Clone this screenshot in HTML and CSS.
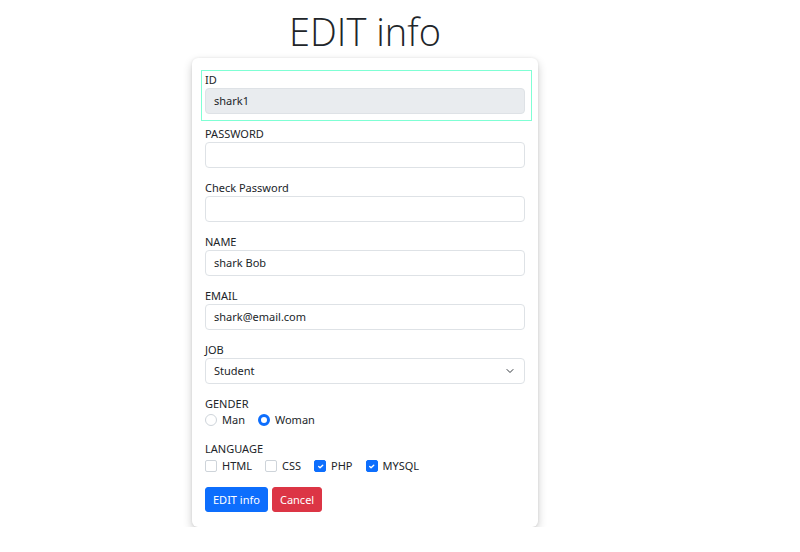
FILE: index.html
```html
<!DOCTYPE html>
<html lang="en">
<head>
<meta charset="utf-8">
<title>EDIT info</title>
<link rel="stylesheet" href="styles.css">
</head>
<body>
<main class="page">
  <h1 class="title">EDIT info</h1>
  <form class="card">
    <div class="group group-id">
      <label class="label">ID</label>
      <div class="input disabled">shark1</div>
    </div>
    <div class="group">
      <label class="label">PASSWORD</label>
      <div class="input"></div>
    </div>
    <div class="group">
      <label class="label">Check Password</label>
      <div class="input"></div>
    </div>
    <div class="group">
      <label class="label">NAME</label>
      <div class="input">shark Bob</div>
    </div>
    <div class="group">
      <label class="label">EMAIL</label>
      <div class="input">shark@email.com</div>
    </div>
    <div class="group">
      <label class="label">JOB</label>
      <div class="input select">
        <span>Student</span>
        <svg class="chev" width="10" height="8" viewBox="0 0 16 16"><path d="M2 5l6 6 6-6" fill="none" stroke="#343a40" stroke-width="2" stroke-linecap="round" stroke-linejoin="round"/></svg>
      </div>
    </div>
    <div class="group group-check">
      <label class="label">GENDER</label>
      <div class="options">
        <span class="opt"><span class="radio"></span>Man</span>
        <span class="opt"><span class="radio on"></span>Woman</span>
      </div>
    </div>
    <div class="group group-check2">
      <label class="label">LANGUAGE</label>
      <div class="options options-low">
        <span class="opt"><span class="box"></span>HTML</span>
        <span class="opt"><span class="box"></span>CSS</span>
        <span class="opt"><span class="box on"><svg width="9" height="9" viewBox="0 0 20 20"><path d="M6 10l3 3 6-6" fill="none" stroke="#fff" stroke-width="3" stroke-linecap="round" stroke-linejoin="round"/></svg></span>PHP</span>
        <span class="opt"><span class="box on"><svg width="9" height="9" viewBox="0 0 20 20"><path d="M6 10l3 3 6-6" fill="none" stroke="#fff" stroke-width="3" stroke-linecap="round" stroke-linejoin="round"/></svg></span>MYSQL</span>
      </div>
    </div>
    <div class="buttons">
      <button type="button" class="btn btn-primary">EDIT info</button>
      <button type="button" class="btn btn-danger">Cancel</button>
    </div>
  </form>
</main>
</body>
</html>
```

FILE: styles.css
```css
* { box-sizing: border-box; }
html, body { margin: 0; padding: 0; background: #fff; }
body {
  font-family: "Noto Sans", "Open Sans", sans-serif;
  font-size: 11px;
  color: #212529;
}
.page {
  width: 730px;
  display: flex;
  flex-direction: column;
  align-items: center;
}
.title {
  margin: 6px 0 2px;
  font-family: "Open Sans", "Noto Sans", sans-serif;
  font-weight: 300;
  font-size: 38px;
  line-height: 50px;
  color: #212529;
}
.card {
  width: 346px;
  padding: 12px 13px 15px;
  background: #fff;
  border-radius: 6px;
  box-shadow: 0 4px 10px rgba(0,0,0,0.2), 0 0 3px rgba(0,0,0,0.08);
  display: flex;
  flex-direction: column;
}
.group { margin-bottom: 12px; display: flex; flex-direction: column; }
.group-id {
  border: 1px solid #7fffd4;
  margin: 0 -7px 5px -4px;
  padding: 1px 6px 6px 3px;
}
.label { display: block; line-height: 16px; height: 16px; }
.input {
  height: 26px;
  border: 1px solid #dee2e6;
  border-radius: 4px;
  padding: 0 8px;
  display: flex;
  align-items: center;
  line-height: 16px;
}
.disabled { background: #e9ecef; }
.select { justify-content: space-between; padding-right: 9px; }
.chev { display: block; }
.group-check { margin-bottom: 13px; }
.group-check2 { margin-bottom: 13px; }
.options { display: flex; height: 16px; align-items: center; }
.options-low { margin-top: 1px; }
.opt { display: inline-flex; align-items: center; margin-right: 13px; line-height: 16px; }
.radio {
  width: 12px; height: 12px;
  border: 1px solid #ced4da;
  border-radius: 50%;
  margin-right: 5px;
  background: #fff;
}
.radio.on { border: 3.5px solid #0d6efd; }
.box {
  width: 12px; height: 12px;
  border: 1px solid #ced4da;
  border-radius: 2px;
  margin-right: 5px;
  display: inline-flex;
  align-items: center;
  justify-content: center;
}
.box.on { background: #0d6efd; border-color: #0d6efd; }
.box svg { display: block; }
.buttons { display: flex; gap: 4px; }
.btn {
  height: 25px;
  padding: 0 7px;
  border: 1px solid transparent;
  border-radius: 3px;
  font-family: inherit;
  font-size: 11px;
  color: #fff;
  cursor: pointer;
}
.btn-primary { background: #0d6efd; border-color: #0d6efd; }
.btn-danger { background: #dc3545; border-color: #dc3545; }
```
